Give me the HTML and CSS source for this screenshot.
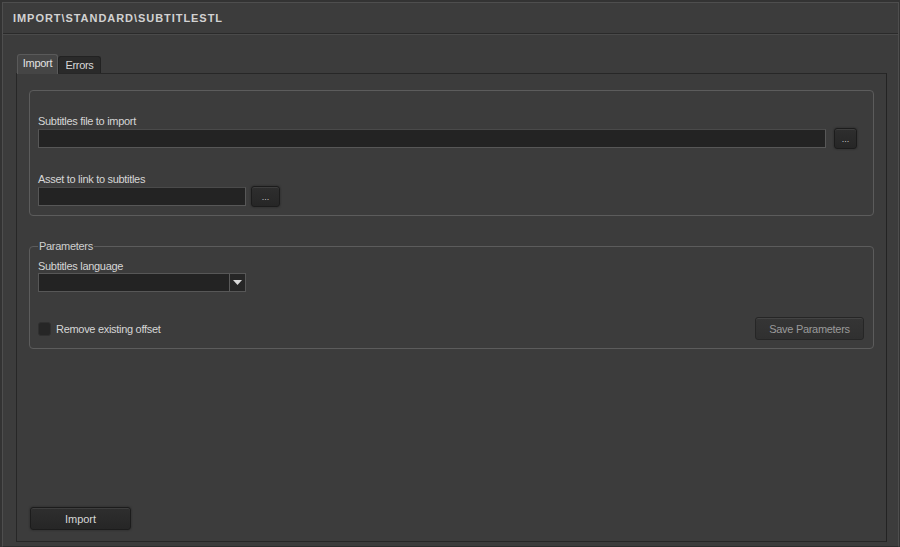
FILE: index.html
```html
<!DOCTYPE html>
<html>
<head>
<meta charset="utf-8">
<link rel="stylesheet" href="styles.css">
</head>
<body>
<div class="window">
  <div class="titlebar">IMPORT\STANDARD\SUBTITLESTL</div>
  <div class="content">
    <div class="tabs">
      <div class="tab active">Import</div>
      <div class="tab">Errors</div>
    </div>
    <div class="panel">
      <div class="group">
        <div class="label">Subtitles file to import</div>
        <div class="row">
          <div class="input wide"></div>
          <div class="btn dots">...</div>
        </div>
        <div class="label second">Asset to link to subtitles</div>
        <div class="row">
          <div class="input short"></div>
          <div class="btn dots">...</div>
        </div>
      </div>
      <fieldset class="params">
        <legend>Parameters</legend>
        <div class="label">Subtitles language</div>
        <div class="select">
          <div class="select-field"></div>
          <div class="select-arrow"><svg width="9" height="5" viewBox="0 0 9 5"><path d="M0 0H9L4.5 5Z" fill="#d8d8d8"/></svg></div>
        </div>
        <div class="bottom-row">
          <div class="check"><span class="box"></span><span>Remove existing offset</span></div>
          <div class="btn save">Save Parameters</div>
        </div>
      </fieldset>
      <div class="btn import">Import</div>
    </div>
  </div>
</div>
</body>
</html>
```
FILE: styles.css
```css
html, body {
  margin: 0;
  padding: 0;
  background: #333333;
  width: 900px;
  height: 547px;
  overflow: hidden;
  font-family: "Liberation Sans", Arial, sans-serif;
  font-size: 11px;
  letter-spacing: -0.3px;
  color: #d6d6d6;
}
.window {
  box-sizing: border-box;
  margin: 2px 1px 0 2px;
  height: 545px;
  background: #3c3c3c;
  border: 1px solid #4e4e4e;
  border-bottom: 1px solid #2c2c2c;
  display: flex;
  flex-direction: column;
}
.titlebar {
  height: 30px;
  border-bottom: 1px solid #2a2a2a;
  box-shadow: 0 1px 0 #4a4a4a;
  padding-left: 10px;
  line-height: 30px;
  font-weight: bold;
  font-size: 11px;
  letter-spacing: 0.95px;
  color: #d2d2d2;
}
.content {
  flex: 1;
  display: flex;
  flex-direction: column;
  padding: 20px 11px 4px 13px;
}
.tabs {
  display: flex;
  align-items: flex-end;
  height: 19px;
  padding-left: 1px;
}
.tab {
  box-sizing: border-box;
  height: 17px;
  width: 43px;
  text-align: center;
  line-height: 16px;
  background: #2a2a2a;
  border: 1px solid #222;
  border-bottom: none;
  border-radius: 3px 3px 0 0;
  color: #d8d8d8;
}
.tab.active {
  height: 20px;
  width: 41px;
  margin-bottom: -1px;
  line-height: 17px;
  background: #454545;
  border-color: #5a5a5a;
  color: #e2e2e2;
  position: relative;
  z-index: 1;
}
.panel {
  flex: 1;
  box-sizing: border-box;
  border: 1px solid #272727;
  border-right-color: #232323;
  background: #3c3c3c;
  padding: 16px 12px 11px 12px;
  display: flex;
  flex-direction: column;
}
.group {
  border: 1px solid #5c5c5c;
  border-radius: 4px;
  padding: 23px 16px 8px 8px;
}
.label {
  line-height: 14px;
  height: 14px;
  margin-bottom: 0;
  color: #d6d6d6;
}
.label.second {
  margin-top: 23px;
}
.row {
  display: flex;
  align-items: center;
  gap: 8px;
}
.input {
  box-sizing: border-box;
  height: 19px;
  background: #232323;
  border: 1px solid #575757;
  border-top-color: #4a4a4a;
}
.input.wide { flex: 1; }
.input.short { width: 208px; }
.row .btn.dots {
  width: 23px;
}
.row:last-child .btn.dots {
  width: 29px;
  margin-left: -3px;
}
.btn {
  box-sizing: border-box;
  height: 21px;
  border: 1px solid #1c1c1c;
  border-radius: 3px;
  background: linear-gradient(#2e2e2e, #262626);
  box-shadow: inset 0 1px 0 #3e3e3e, 0 0 2px #222;
  display: flex;
  align-items: center;
  justify-content: center;
  color: #cfcfcf;
  letter-spacing: 0;
}
.btn.dots {
  font-size: 9px;
  color: #c8c8c8;
  padding-top: 1px;
}
.params {
  margin: 23px 0 0 0;
  border: 1px solid #5c5c5c;
  border-radius: 4px;
  padding: 6px 9px 8px 8px;
}
.params legend {
  padding: 0 1px;
  margin-left: 0;
  line-height: 14px;
  color: #cfcfcf;
}
.select {
  display: flex;
  width: 208px;
  height: 19px;
  box-sizing: border-box;
  border: 1px solid #575757;
  background: #232323;
}
.select-field { flex: 1; }
.select-arrow {
  width: 15px;
  border-left: 1px solid #5a5a5a;
  background: #262626;
  display: flex;
  align-items: center;
  justify-content: center;
}
.bottom-row {
  margin-top: 25px;
  display: flex;
  justify-content: space-between;
  align-items: center;
}
.check {
  display: flex;
  align-items: center;
  gap: 5px;
  color: #d6d6d6;
}
.check .box {
  width: 13px;
  height: 14px;
  box-sizing: border-box;
  border-radius: 3px;
  background: #262626;
  border: 1px solid #303030;
}
.btn.save {
  width: 109px;
  height: 23px;
  color: #9a9a9a;
  letter-spacing: -0.3px;
  background: linear-gradient(#353535, #303030);
  border-color: #262626;
  box-shadow: inset 0 1px 0 #444;
}
.btn.import {
  margin-top: auto;
  margin-left: 1px;
  width: 101px;
  height: 23px;
  color: #d6d6d6;
}
```
